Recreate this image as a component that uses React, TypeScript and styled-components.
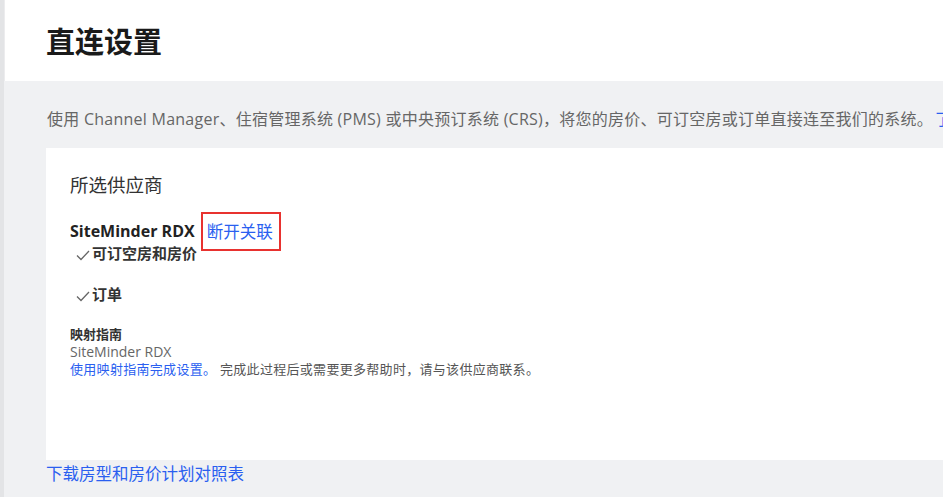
import styled, { createGlobalStyle } from 'styled-components';

const GlobalStyle = createGlobalStyle`
  html, body {
    margin: 0;
    padding: 0;
    background: #ffffff;
  }
  body {
    font-family: "Open Sans", "Noto Sans CJK SC", sans-serif;
    color: #333;
  }
`;

const Page = styled.div`
  display: flex;
  width: 947px;
  height: 497px;
  overflow: hidden;
`;

const Rail = styled.div`
  width: 4px;
  flex-shrink: 0;
  background: #e3e4e6;
  border-right: 1px solid #ececee;
`;

const Main = styled.div`
  flex: 1;
  display: flex;
  flex-direction: column;
  min-width: 0;
`;

const Header = styled.header`
  height: 81px;
  background: #fff;
  display: flex;
  align-items: center;
  padding-left: 41px;
`;

const Title = styled.h1`
  margin: 0;
  font-size: 29px;
  font-weight: 700;
  color: #1a1a1a;
  font-family: "Noto Sans CJK SC", sans-serif;
  transform: translateY(-1px);
`;

const Content = styled.div`
  flex: 1;
  background: #f0f1f3;
  margin-right: 4px;
  margin-left: -1px;
  padding: 0 0 0 42px;
  overflow: hidden;
`;

const Intro = styled.p`
  margin: 0;
  height: 67px;
  display: flex;
  align-items: center;
  padding-left: 1px;
  font-size: 16px;
  letter-spacing: 0.25px;
  color: #666;
  white-space: nowrap;
  transform: translateY(3px);
`;

const Link = styled.a<{ $size?: number }>`
  color: #2a5ff0;
  text-decoration: none;
  font-size: ${(p) => p.$size ?? 16}px;
  cursor: pointer;
`;

const IntroLink = styled(Link)`
  margin-left: 2px;
`;

const Card = styled.section`
  background: #fff;
  height: 312px;
  padding: 24px 24px 0;
  box-sizing: border-box;
`;

const CardTitle = styled.h2`
  margin: 0;
  font-size: 18.5px;
  font-weight: 400;
  color: #333;
  line-height: 26px;
`;

const Provider = styled.div`
  display: flex;
  align-items: center;
  margin-top: 21px;
  height: 24px;
`;

const ProviderName = styled.span`
  font-size: 16px;
  font-weight: 700;
  color: #222;
  margin-right: 6px;
`;

const Highlight = styled.span`
  border: 2px solid #e8322f;
  padding: 0 6px 0 4px;
  height: 35px;
  display: flex;
  align-items: center;
  flex-shrink: 0;
`;

const Feature = styled.div<{ $gap?: number }>`
  display: flex;
  align-items: center;
  margin-top: ${(p) => p.$gap ?? 0}px;
  padding-left: 5px;
  font-size: 15px;
  font-weight: 700;
  color: #333;
  line-height: 20px;
`;

const Check = styled.svg`
  width: 16px;
  height: 16px;
  margin-right: 1px;
  margin-top: 3px;
`;

const Guide = styled.div`
  margin-top: 21px;
  display: flex;
  flex-direction: column;
`;

const GuideLabel = styled.span`
  font-size: 13px;
  font-weight: 700;
  color: #333;
  line-height: 18px;
`;

const GuideName = styled.span`
  font-size: 14px;
  color: #666;
  line-height: 17px;
`;

const GuideText = styled.span`
  font-size: 13px;
  letter-spacing: 0.3px;
  color: #555;
  line-height: 18px;
`;

const Footer = styled.div`
  height: 26px;
  display: flex;
  align-items: center;
`;

const Tick = () => (
  <Check viewBox="0 0 16 16" fill="none" stroke="#666" strokeWidth="1.3">
    <path d="M2 8.5 L6 12.5 L14 4" />
  </Check>
);

export default function App() {
  return (
    <>
      <GlobalStyle />
      <Page>
        <Rail />
        <Main>
          <Header>
            <Title>直连设置</Title>
          </Header>
          <Content>
            <Intro>
              使用 Channel Manager、住宿管理系统 (PMS) 或中央预订系统 (CRS)，将您的房价、可订空房或订单直接连至我们的系统。
              <IntroLink>了解更多</IntroLink>
            </Intro>
            <Card>
              <CardTitle>所选供应商</CardTitle>
              <Provider>
                <ProviderName>SiteMinder RDX</ProviderName>
                <Highlight>
                  <Link $size={16.5}>断开关联</Link>
                </Highlight>
              </Provider>
              <Feature>
                <Tick />
                可订空房和房价
              </Feature>
              <Feature $gap={21}>
                <Tick />
                订单
              </Feature>
              <Guide>
                <GuideLabel>映射指南</GuideLabel>
                <GuideName>SiteMinder RDX</GuideName>
                <GuideText>
                  <Link $size={13}>使用映射指南完成设置。</Link> 完成此过程后或需要更多帮助时，请与该供应商联系。
                </GuideText>
              </Guide>
            </Card>
            <Footer>
              <Link $size={16.5}>下载房型和房价计划对照表</Link>
            </Footer>
          </Content>
        </Main>
      </Page>
    </>
  );
}
